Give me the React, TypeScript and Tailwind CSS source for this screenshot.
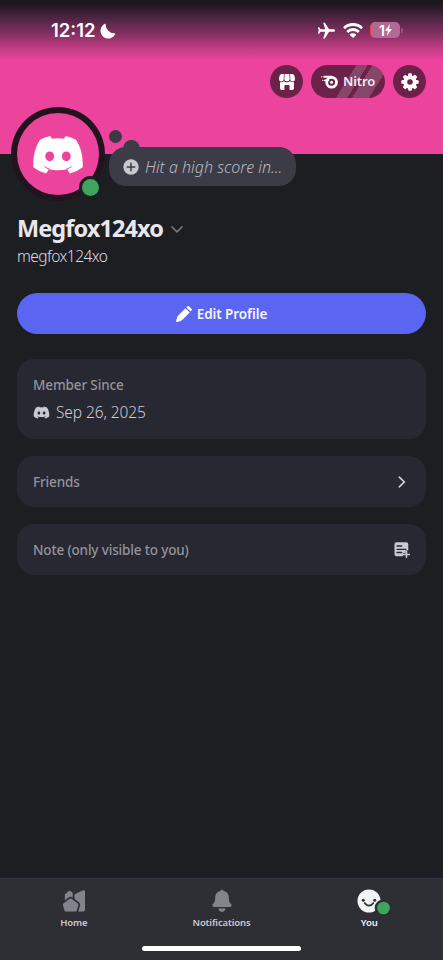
import type { ReactNode } from "react";
import { FaDiscord } from "react-icons/fa6";
import { IoMdAirplane } from "react-icons/io";

function Moon() {
  return (
    <svg className="h-4 w-4" viewBox="0 0 16 16" fill="#fff">
      <path d="M5.600.6A7.700 7.700 0 1 0 15.400 10.600 9.500 9.500 0 0 1 5.600.6Z" />
    </svg>
  );
}

function Wifi() {
  return (
    <svg className="h-[15px] w-5" viewBox="0 0 20 15" fill="none" stroke="#fff" strokeWidth="2.800">
      <path d="M1 5.200a12.800 12.800 0 0 1 18 0" />
      <path d="M4.200 8.900a8.200 8.200 0 0 1 11.600 0" />
      <path d="M10 15 6.600 11.700a4.800 4.800 0 0 1 6.800 0Z" fill="#fff" stroke="none" />
    </svg>
  );
}

function Battery() {
  return (
    <div className="flex items-center gap-px">
      <div className="flex h-4 w-[30px] items-center justify-center overflow-hidden rounded-[5px] border-l border-[#f0384b] bg-[#b26a93] font-['Inter',sans-serif] text-[14px] font-semibold text-white">
        1
        <svg className="h-3 w-[7px]" viewBox="0 0 7 12" fill="#fff">
          <path d="M5 0 0 6.800h2.900L1.700 12 7 4.900H4Z" />
        </svg>
      </div>
      <div className="h-[5px] w-0.5 rounded-r bg-[#a05482]" />
    </div>
  );
}

function Shop() {
  return (
    <svg className="h-4 w-4" viewBox="0 0 16 16" fill="#fff">
      <path d="M2.800 0h2.100L4.700 5.200A2.300 2.300 0 0 1 0 5.300Q.1 3.300.7 1.500 1.200 0 2.800 0Z" />
      <path d="M5.700 0h4.600l.4 5.200a2.300 2.300 0 0 1-2.700 1.900A2.300 2.300 0 0 1 5.300 5.200Z" />
      <path d="M11.100 0h2.100q1.600 0 2.100 1.500.6 1.800.7 3.800a2.300 2.300 0 0 1-4.700-.1Z" />
      <path d="M1 8.200q2.300.3 4-1 1.300 1.100 3 1.100t3-1.100q1.700 1.300 4 1v6q0 1.800-1.800 1.800H10.600v-4q0-1-1-1H6.400q-1 0-1 1v4H2.800Q1 16 1 14.200Z" />
    </svg>
  );
}

function NitroMark() {
  return (
    <svg className="h-[14px] w-[17px]" viewBox="0 0 17 14" fill="none" stroke="#fff">
      <circle cx="10.600" cy="7.200" r="4.900" strokeWidth="2.800" />
      <circle cx="10.600" cy="7.200" r="1.500" fill="#fff" stroke="none" />
      <path d="M3.300 1.800h7.300" strokeWidth="2" strokeLinecap="round" />
      <path d="M4 5.400h3.300" strokeWidth="1.900" strokeLinecap="round" />
      <path d="M.7 1.800h.2M1.800 5.300h.1" strokeWidth="1.300" strokeLinecap="round" />
    </svg>
  );
}

function Gear() {
  const teeth = [0, 45, 90, 135, 180, 225, 270, 315];
  return (
    <svg className="h-[18px] w-[18px]" viewBox="-9 -9 18 18" fill="#fff">
      {teeth.map((a) => (
        <path key={a} d="M-2.300-5-1.800-8Q-1.700-8.700-1-8.700H1q.7 0 .8.700L2.300-5Z" transform={`rotate(${a})`} />
      ))}
      <circle r="4.700" fill="none" stroke="#fff" strokeWidth="3.800" />
    </svg>
  );
}

function AvatarMark() {
  return (
    <svg className="mt-px h-[38px] w-[50px]" viewBox="0 0 50 38">
      <path
        d="M7 3.800Q12 1 17.300 0q1 1.300 1.500 2.700 6.200-.9 12.400 0Q31.700 1.300 32.700 0 38 1 43 3.800 50.500 15 49.700 31.200 44 35.800 36.800 37.500L34.200 33.200Q25 35.500 15.800 33.200L13.200 37.500Q6 35.800.3 31.200-.5 15 7 3.800Z"
        fill="#fff"
      />
      <path d="M11.800 30.800q2 1.500 4.600 2.300M38.200 30.800q-2 1.500-4.600 2.300" stroke="#ec449c" strokeWidth="1" strokeLinecap="round" fill="none" />
      <ellipse cx="16.700" cy="20.300" rx="4.400" ry="4.900" fill="#ec449c" />
      <ellipse cx="33.300" cy="20.300" rx="4.400" ry="4.900" fill="#ec449c" />
    </svg>
  );
}

function Pencil() {
  return (
    <svg className="h-4 w-4" viewBox="0 0 16 16" fill="#fff">
      <path d="m10.400 1.400.8-.8q1-1 2 0l2.200 2.200q1 1 0 2l-.8.800Z" />
      <path d="m9.500 2.300 4.200 4.200-7 7.100Q5.700 14.600 4.600 14.900L1.300 15.900Q-.2 16.200.1 14.700L1.100 11.400q.3-1.100 1.300-2.100Z" />
    </svg>
  );
}

function NoteAdd() {
  return (
    <svg className="h-4 w-4" viewBox="0 0 16 16">
      <path d="M2.500.2h9.800q2 0 2 2v6.400h-2.600v2.700H9v3H2.500q-2 0-2-2V2.200q0-2 2-2Z" fill="#c9c9d1" />
      <path d="M3 4h4.700M3 7.300h8.800M3 10.500h4.700" stroke="#282832" strokeWidth="1.300" strokeLinecap="round" />
      <path d="M12.500 9.400v6M9.500 12.400h6" stroke="#c9c9d1" strokeWidth="1.500" strokeLinecap="round" />
    </svg>
  );
}

function HomeIcon() {
  return (
    <svg className="h-[22px] w-6" viewBox="0 0 24 22" fill="#83838c">
      <path d="M2.800 5q0-.8.700-1.300L6.700 1q.8-.6 1.600 0l1.800 1.300q.6.400.6 1.100V12H2.800Z" />
      <path d="M12.500 5.200q0-.8.700-1.200L20.500.5q2.500-.8 2.500 1v18.200q0 1.800-1.800 1.800h-7q-1 0-.7-1l-1-8.500Z" />
      <path
        d="M7.600 8.800q1-.8 2 0l6.200 4.700q.8.700.6 1.600l-1.600 5.500q-.3.900-1.200.9H3.700q-.9 0-1.200-.9L.9 15.100q-.3-.9.600-1.600Z"
        stroke="#2e2e35"
        strokeWidth="3.400"
        paintOrder="stroke"
      />
    </svg>
  );
}

function BellIcon() {
  return (
    <svg className="h-6 w-5" viewBox="0 0 20 24" fill="#83838c">
      <path d="M10 .8q1.400 0 1.700 1.300 5.100 1.200 5.100 6.300 0 4.600 1.900 6.200 1.200 1.100.8 2.100-.3 1.200-1.800 1.200H2.300q-1.500 0-1.800-1.200-.4-1 .8-2.100 1.900-1.600 1.900-6.200 0-5.100 5.100-6.300Q8.600.8 10 .8Z" />
      <path d="M7 19.500h6q.8 0 .5.800-.9 2.600-3.500 2.600t-3.500-2.600q-.3-.8.500-.8Z" />
    </svg>
  );
}

function YouIcon() {
  return (
    <svg className="h-6 w-9 overflow-visible" viewBox="0 0 36 24">
      <circle cx="12" cy="12" r="11.500" fill="#f3f4f6" />
      <circle cx="6.300" cy="11.200" r="1.500" fill="#2e2e35" />
      <circle cx="17.700" cy="11.200" r="1.500" fill="#2e2e35" />
      <path d="M7.700 14.200q4.300 5 8.600 0" fill="none" stroke="#2e2e35" strokeWidth="1.800" strokeLinecap="round" />
      <circle cx="26.500" cy="19" r="8.800" fill="#2e2e35" />
      <circle cx="26.500" cy="19" r="6.300" fill="#3fa45e" />
    </svg>
  );
}

function Card({ className, children }: { className: string; children: ReactNode }) {
  return <section className={`rounded-[17px] bg-[#282832] px-4 ${className}`}>{children}</section>;
}

function Tab({ icon, label, className }: { icon: ReactNode; label: string; className: string }) {
  return (
    <div className="flex flex-1 flex-col items-center">
      <div className="flex h-6 items-center">{icon}</div>
      <span className={`mt-[3px] text-[9.500px] leading-[14px] font-semibold tracking-[-0.120px] ${className}`}>{label}</span>
    </div>
  );
}

export default function App() {
  return (
    <div className="flex h-[960px] w-full flex-col overflow-hidden bg-[#1d1e22] font-['Noto_Sans','Open_Sans',sans-serif]">
      <header className="h-[154px] shrink-0 bg-[#ec449c] bg-[linear-gradient(to_bottom,#1a171c_0px,#1d181e_4px,#4a2440_17px,#843062_34px,#c23c83_48px,#ec449c_61px)]">
        <div className="flex h-[60px] items-center pr-[40px] pl-[51px]">
          <span className="mt-px w-[45px] font-['Inter',sans-serif] text-[18.500px] font-semibold text-white">12:12</span>
          <div className="mt-0.5 ml-1">
            <Moon />
          </div>
          <div className="ml-auto flex items-center">
            <IoMdAirplane className="mr-[6px] h-[21px] w-[21px] rotate-90 text-white" />
            <Wifi />
            <div className="ml-[7px]">
              <Battery />
            </div>
          </div>
        </div>
        <div className="mt-[5px] flex h-[33px] justify-end gap-2 pr-[17px]">
          <div className="flex w-[33px] items-center justify-center rounded-full bg-[#6c2149]">
            <Shop />
          </div>
          <div className="flex w-[74px] items-center rounded-full bg-[#6c2149] bg-[linear-gradient(122deg,transparent_0_48%,#85466a_48%_60%,transparent_60%_65%,#85466a_65%_83%,transparent_83%)] pl-[10px] text-[13px] font-semibold tracking-[-0.100px] text-[#f5e9ef]">
            <NitroMark />
            <span className="ml-[5px]">Nitro</span>
          </div>
          <div className="flex w-[33px] items-center justify-center rounded-full bg-[#6c2149]">
            <Gear />
          </div>
        </div>
      </header>

      <main className="relative flex-1 px-[17px]">
        <div className="absolute -top-[47px] left-[11px] h-[94px] w-[94px] rounded-full bg-[#21141f] p-[6px]">
          <div className="flex h-full items-center justify-center rounded-full bg-[#ec449c]">
            <AvatarMark />
          </div>
          <div className="absolute top-[69px] left-[68px] h-[23px] w-[23px] rounded-full bg-[#1d1e22] p-[3px]">
            <div className="h-full rounded-full bg-[#3fa45e]" />
          </div>
        </div>
        <div className="absolute -top-[24px] left-[109px] h-[13px] w-[13px] rounded-full bg-[#3b3b45]" />
        <div className="absolute -top-[14px] left-[123px] h-[17px] w-[17px] rounded-full bg-[#3b3c45]" />
        <div className="absolute -top-[7px] left-[109px] flex h-[39px] w-[187px] items-center rounded-[17px] bg-[#3b3c45] pl-[14px]">
          <svg className="h-4 w-4 shrink-0" viewBox="0 0 16 16">
            <circle cx="8" cy="8" r="7.700" fill="#c8c8ce" />
            <path d="M8 4.300v7.400M4.300 8h7.400" stroke="#3b3c45" strokeWidth="1.500" strokeLinecap="round" />
          </svg>
          <span className="ml-[6px] text-[16px] font-light whitespace-nowrap text-[#b8b9c0] italic">Hit a high score in...</span>
        </div>

        <div className="box-content flex h-[30px] items-center pt-[60px]">
          <h1 className="text-[23.500px] font-bold tracking-[-0.920px] text-[#e8e8ec]">Megfox124xo</h1>
          <svg className="ml-[8px] h-[7px] w-3" viewBox="0 0 12 7" fill="none" stroke="#777780" strokeWidth="1.500" strokeLinecap="round">
            <path d="m1 .9 5 5 5-5" />
          </svg>
        </div>
        <p className="h-[25px] text-[15.500px] leading-[24px] font-light tracking-[-0.550px] text-[#dcdce2]">megfox124xo</p>

        <button className="mt-[24px] flex h-[41px] w-full items-center justify-center gap-[5px] rounded-full bg-[#5a66f2] text-[13.500px] font-semibold tracking-[-0.100px] text-[#f3f4ff]">
          <Pencil />
          <span className="mt-0.5">Edit Profile</span>
        </button>

        <div className="mt-[25px] flex flex-col gap-[17px]">
          <Card className="h-[80px] pt-4">
            <h2 className="text-[13.500px] leading-[20px] font-medium tracking-[-0.130px] text-[#93939d]">Member Since</h2>
            <div className="mt-[5px] flex h-6 items-center">
              <FaDiscord className="h-[17px] w-[17px] text-[#c9c9d1]" />
              <span className="mt-0.5 ml-[6px] text-[15.500px] font-light tracking-[-0.100px] text-[#cdcdd5]">Sep 26, 2025</span>
            </div>
          </Card>
          <Card className="flex h-[51px] items-center justify-between">
            <span className="mt-px text-[13.500px] font-medium tracking-[-0.130px] text-[#93939d]">Friends</span>
            <svg className="mr-[4px] h-3 w-2" viewBox="0 0 8 12" fill="none" stroke="#d4d4da" strokeWidth="1.600" strokeLinecap="round">
              <path d="m1.300 1.200 5 4.800-5 4.800" />
            </svg>
          </Card>
          <Card className="flex h-[51px] items-center justify-between">
            <span className="mt-px text-[13.500px] font-medium tracking-[-0.150px] text-[#93939d]">Note (only visible to you)</span>
            <NoteAdd />
          </Card>
        </div>
      </main>

      <nav className="flex h-[82px] shrink-0 flex-col border-t border-[#34353f] bg-[#2e2e35]">
        <div className="flex h-[67px] pt-[10px]">
          <Tab icon={<HomeIcon />} label="Home" className="text-[#c9c9d0]" />
          <Tab icon={<BellIcon />} label="Notifications" className="text-[#c9c9d0]" />
          <Tab icon={<div className="ml-3"><YouIcon /></div>} label="You" className="text-[#f3f4f6]" />
        </div>
        <div className="mx-auto h-[5px] w-[159px] rounded-full bg-white" />
      </nav>
    </div>
  );
}
